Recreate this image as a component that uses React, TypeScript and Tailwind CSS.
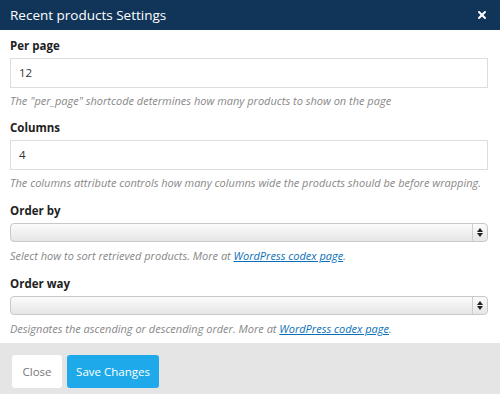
import { X } from 'lucide-react'

function Field({ label, value, help }: { label: string; value: string; help: React.ReactNode }) {
  return (
    <div className="mt-[11px] first:mt-0">
      <label className="block text-[11.5px] font-bold leading-[16px] text-[#222]">{label}</label>
      <div className="mt-[4px] h-[30px] border border-[#ddd] bg-white px-[8px] text-[11.5px] leading-[28px] text-[#333]">
        {value}
      </div>
      <p className="mt-[5px] text-[11px] italic leading-[16px] text-[#888]">{help}</p>
    </div>
  )
}

function SelectField({ label, help }: { label: string; help: React.ReactNode }) {
  return (
    <div className="mt-[12px]">
      <label className="block text-[11.5px] font-bold leading-[16px] text-[#222]">{label}</label>
      <div className="mt-[4px] flex h-[19px] overflow-hidden rounded-[4px] border border-[#c8c8c8] bg-gradient-to-b from-[#fbfbfb] to-[#e6e6e6]">
        <div className="flex-1" />
        <div className="flex w-[15px] flex-col items-center justify-center gap-[1px] border-l border-[#cfcfcf]">
          <svg width="6" height="4" viewBox="0 0 6 4">
            <path d="M3 0 L6 4 L0 4 Z" fill="#222" />
          </svg>
          <svg width="6" height="4" viewBox="0 0 6 4">
            <path d="M0 0 L6 0 L3 4 Z" fill="#222" />
          </svg>
        </div>
      </div>
      <p className="mt-[6px] text-[11px] italic leading-[16px] text-[#888]">{help}</p>
    </div>
  )
}

const codex = <a className="text-[#0a6fb8] underline">WordPress codex page</a>

export default function App() {
  return (
    <div className="h-[394px] w-[500px] bg-white font-['Open_Sans',sans-serif]">
      <div className="flex h-[30px] items-center justify-between bg-[#113559] pl-[10px] pr-[12px]">
        <h1 className="text-[13.5px] leading-[20px] text-white">Recent products Settings</h1>
        <X size={12} strokeWidth={4} className="text-white" />
      </div>

      <div className="h-[313px] pl-[10px] pr-[12px] pt-[8px]">
        <Field
          label="Per page"
          value="12"
          help={'The "per_page" shortcode determines how many products to show on the page'}
        />
        <Field
          label="Columns"
          value="4"
          help="The columns attribute controls how many columns wide the products should be before wrapping."
        />
        <SelectField
          label="Order by"
          help={<>Select how to sort retrieved products. More at {codex}.</>}
        />
        <SelectField
          label="Order way"
          help={<>Designates the ascending or descending order. More at {codex}.</>}
        />
      </div>

      <div className="flex h-[51px] gap-[5px] bg-[#e5e5e5] pl-[12px] pt-[12px]">
        <button className="h-[33px] w-[50px] rounded-[3px] bg-white text-[11.5px] text-[#777]">Close</button>
        <button className="h-[33px] w-[92px] rounded-[3px] bg-[#1eaaea] text-[11.5px] text-white">Save Changes</button>
      </div>
    </div>
  )
}
